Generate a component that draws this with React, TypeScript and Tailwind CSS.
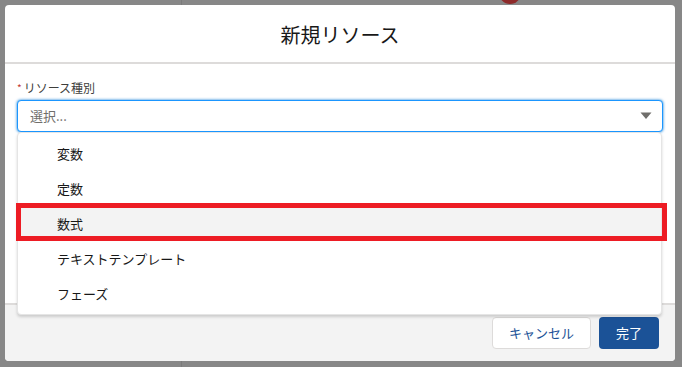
const options = ["変数", "定数", "数式", "テキストテンプレート", "フェーズ"];

const jp = "font-['Noto_Sans_CJK_JP','Noto_Sans',sans-serif]";

export default function App() {
  return (
    <div className={`relative h-[367px] w-[682px] overflow-hidden bg-[#878787] p-[5px] ${jp}`}>
      {/* page behind the overlay */}
      <div className="absolute left-[181px] top-0 h-full w-px bg-[#7b7b7b]" />
      <div className="absolute left-[499px] -top-[18px] h-[22px] w-[22px] rounded-full bg-[#8e2a2a]" />

      <div className="relative flex h-[356px] w-[670px] flex-col rounded-[4px] bg-white">
        {/* header */}
        <div className="flex h-[59px] shrink-0 items-center justify-center border-b-2 border-[#dddbda] pt-[2px]">
          <h2 className="text-[20px] font-normal text-[#181818]">新規リソース</h2>
        </div>

        {/* body */}
        <div className="relative flex-1 px-3 pt-[15px]">
          <label className="flex items-center text-[12px] leading-[18px] text-[#3e3e3c]">
            <span className="mr-[2px] text-[10px] text-[#c23934]">*</span>
            リソース種別
          </label>
          <div className="mt-[3px] flex h-[32px] items-center justify-between rounded-[4px] border border-[#1b96ff] bg-white pl-[12px] pr-[10px] shadow-[0_0_3px_#0176d3]">
            <span className="text-[13px] text-[#706e6b]">選択...</span>
            <svg width="12" height="8" viewBox="0 0 12 8">
              <path d="M0.5 0.5 H11.5 L6 7 Z" fill="#706e6b" />
            </svg>
          </div>

          {/* listbox */}
          <ul className="absolute left-3 right-[13px] top-[68px] z-10 rounded-[4px] border border-[#e5e5e5] bg-white pb-[3px] pt-[3px] shadow-[0_2px_3px_rgba(0,0,0,0.16)]">
            {options.map((o, i) => (
              <li
                key={o}
                className={`relative flex h-[35px] items-center pl-[39px] text-[13px] text-[#181818] ${i === 2 ? "bg-[#f3f3f3]" : ""}`}
              >
                {o}
                {i === 2 && (
                  <span className="pointer-events-none absolute -left-[2px] -right-[6px] -top-[3px] bottom-0 border-[5px] border-[#ed1c24]" />
                )}
              </li>
            ))}
          </ul>
        </div>

        {/* footer */}
        <div className="flex h-[58px] shrink-0 items-start justify-end gap-[8px] rounded-b-[4px] border-t-2 border-[#dddbda] bg-[#f3f3f3] px-4 pt-[12px]">
          <button className="h-[32px] w-[99px] rounded-[4px] border border-[#dddbda] bg-white text-[13px] text-[#1b5297]">
            キャンセル
          </button>
          <button className="h-[32px] w-[60px] rounded-[4px] bg-[#1b5297] text-[13px] text-white">
            完了
          </button>
        </div>
      </div>
    </div>
  );
}
